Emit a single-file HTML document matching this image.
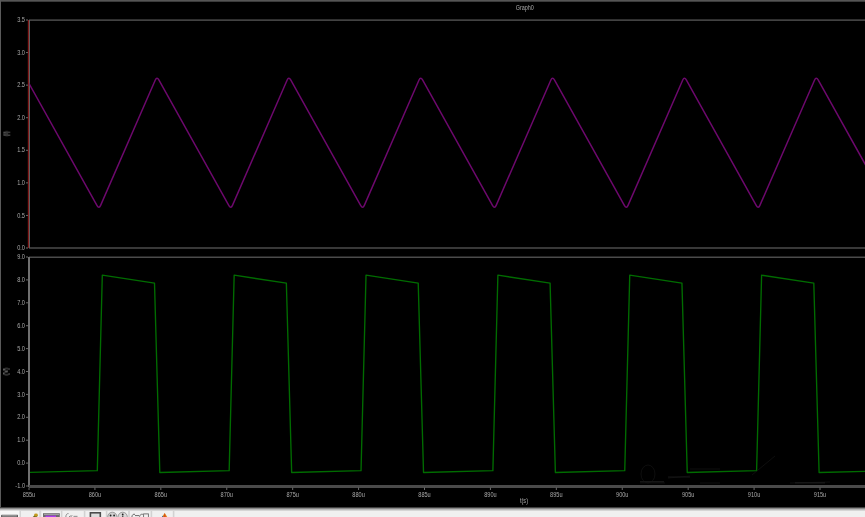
<!DOCTYPE html>
<html><head><meta charset="utf-8"><style>
html,body{margin:0;padding:0;background:#000;width:865px;height:517px;overflow:hidden}
svg{display:block;font-family:"Liberation Sans", sans-serif;}
#w{}
</style></head><body>
<div id="w"><svg width="865" height="517" viewBox="0 0 865 517">
<rect x="0" y="0" width="865" height="517" fill="#000"/>
<rect x="0" y="0" width="865" height="1.7" fill="#555"/>
<rect x="0" y="0" width="1" height="508" fill="#5a5a5a"/>
<text filter="url(#tb)" x="524.8" y="10" font-size="7" fill="#a8a8a8" text-anchor="middle" transform="translate(524.8 0) scale(0.78 1) translate(-524.8 0)">Graph0</text>
<rect x="29" y="19.5" width="836" height="1.2" fill="#5e5e5e"/>
<rect x="29" y="247.4" width="836" height="1.2" fill="#5e5e5e"/>
<rect x="29" y="20" width="1" height="228" fill="#5e5e5e"/>
<rect x="27.8" y="20" width="1.2" height="228" fill="#801a1a"/>
<rect x="29" y="256.6" width="836" height="1.2" fill="#5e5e5e"/>
<rect x="28" y="257" width="2" height="230" fill="#707070"/>
<rect x="29" y="485" width="836" height="3" fill="#4a4a4a"/>
<rect x="26" y="19.5" width="2" height="1" fill="#6a6a6a"/>
<text filter="url(#tb)" x="25" y="22.2" font-size="7" fill="#a8a8a8" text-anchor="end" transform="translate(25 0) scale(0.8 1) translate(-25 0)">3.5</text>
<rect x="26" y="52.07" width="2" height="1" fill="#6a6a6a"/>
<text filter="url(#tb)" x="25" y="54.77" font-size="7" fill="#a8a8a8" text-anchor="end" transform="translate(25 0) scale(0.8 1) translate(-25 0)">3.0</text>
<rect x="26" y="84.64" width="2" height="1" fill="#6a6a6a"/>
<text filter="url(#tb)" x="25" y="87.34" font-size="7" fill="#a8a8a8" text-anchor="end" transform="translate(25 0) scale(0.8 1) translate(-25 0)">2.5</text>
<rect x="26" y="117.21" width="2" height="1" fill="#6a6a6a"/>
<text filter="url(#tb)" x="25" y="119.91" font-size="7" fill="#a8a8a8" text-anchor="end" transform="translate(25 0) scale(0.8 1) translate(-25 0)">2.0</text>
<rect x="26" y="149.79" width="2" height="1" fill="#6a6a6a"/>
<text filter="url(#tb)" x="25" y="152.49" font-size="7" fill="#a8a8a8" text-anchor="end" transform="translate(25 0) scale(0.8 1) translate(-25 0)">1.5</text>
<rect x="26" y="182.36" width="2" height="1" fill="#6a6a6a"/>
<text filter="url(#tb)" x="25" y="185.06" font-size="7" fill="#a8a8a8" text-anchor="end" transform="translate(25 0) scale(0.8 1) translate(-25 0)">1.0</text>
<rect x="26" y="214.93" width="2" height="1" fill="#6a6a6a"/>
<text filter="url(#tb)" x="25" y="217.63" font-size="7" fill="#a8a8a8" text-anchor="end" transform="translate(25 0) scale(0.8 1) translate(-25 0)">0.5</text>
<rect x="26" y="247.5" width="2" height="1" fill="#6a6a6a"/>
<text filter="url(#tb)" x="25" y="250.2" font-size="7" fill="#a8a8a8" text-anchor="end" transform="translate(25 0) scale(0.8 1) translate(-25 0)">0.0</text>
<rect x="26" y="256.5" width="2" height="1" fill="#6a6a6a"/>
<text filter="url(#tb)" x="25" y="259.2" font-size="7" fill="#a8a8a8" text-anchor="end" transform="translate(25 0) scale(0.8 1) translate(-25 0)">9.0</text>
<rect x="26" y="279.4" width="2" height="1" fill="#6a6a6a"/>
<text filter="url(#tb)" x="25" y="282.1" font-size="7" fill="#a8a8a8" text-anchor="end" transform="translate(25 0) scale(0.8 1) translate(-25 0)">8.0</text>
<rect x="26" y="302.3" width="2" height="1" fill="#6a6a6a"/>
<text filter="url(#tb)" x="25" y="305" font-size="7" fill="#a8a8a8" text-anchor="end" transform="translate(25 0) scale(0.8 1) translate(-25 0)">7.0</text>
<rect x="26" y="325.2" width="2" height="1" fill="#6a6a6a"/>
<text filter="url(#tb)" x="25" y="327.9" font-size="7" fill="#a8a8a8" text-anchor="end" transform="translate(25 0) scale(0.8 1) translate(-25 0)">6.0</text>
<rect x="26" y="348.1" width="2" height="1" fill="#6a6a6a"/>
<text filter="url(#tb)" x="25" y="350.8" font-size="7" fill="#a8a8a8" text-anchor="end" transform="translate(25 0) scale(0.8 1) translate(-25 0)">5.0</text>
<rect x="26" y="371" width="2" height="1" fill="#6a6a6a"/>
<text filter="url(#tb)" x="25" y="373.7" font-size="7" fill="#a8a8a8" text-anchor="end" transform="translate(25 0) scale(0.8 1) translate(-25 0)">4.0</text>
<rect x="26" y="393.9" width="2" height="1" fill="#6a6a6a"/>
<text filter="url(#tb)" x="25" y="396.6" font-size="7" fill="#a8a8a8" text-anchor="end" transform="translate(25 0) scale(0.8 1) translate(-25 0)">3.0</text>
<rect x="26" y="416.8" width="2" height="1" fill="#6a6a6a"/>
<text filter="url(#tb)" x="25" y="419.5" font-size="7" fill="#a8a8a8" text-anchor="end" transform="translate(25 0) scale(0.8 1) translate(-25 0)">2.0</text>
<rect x="26" y="439.7" width="2" height="1" fill="#6a6a6a"/>
<text filter="url(#tb)" x="25" y="442.4" font-size="7" fill="#a8a8a8" text-anchor="end" transform="translate(25 0) scale(0.8 1) translate(-25 0)">1.0</text>
<rect x="26" y="462.6" width="2" height="1" fill="#6a6a6a"/>
<text filter="url(#tb)" x="25" y="465.3" font-size="7" fill="#a8a8a8" text-anchor="end" transform="translate(25 0) scale(0.8 1) translate(-25 0)">0.0</text>
<rect x="26" y="485.5" width="2" height="1" fill="#6a6a6a"/>
<text filter="url(#tb)" x="25" y="488.2" font-size="7" fill="#a8a8a8" text-anchor="end" transform="translate(25 0) scale(0.8 1) translate(-25 0)">-1.0</text>
<rect x="28.5" y="487.5" width="1" height="2.5" fill="#6a6a6a"/>
<text filter="url(#tb)" x="29" y="497.3" font-size="7" fill="#a8a8a8" text-anchor="middle" transform="translate(29 0) scale(0.8 1) translate(-29 0)">855u</text>
<rect x="94.42" y="487.5" width="1" height="2.5" fill="#6a6a6a"/>
<text filter="url(#tb)" x="94.92" y="497.3" font-size="7" fill="#a8a8a8" text-anchor="middle" transform="translate(94.92 0) scale(0.8 1) translate(-94.92 0)">860u</text>
<rect x="160.33" y="487.5" width="1" height="2.5" fill="#6a6a6a"/>
<text filter="url(#tb)" x="160.83" y="497.3" font-size="7" fill="#a8a8a8" text-anchor="middle" transform="translate(160.83 0) scale(0.8 1) translate(-160.83 0)">865u</text>
<rect x="226.25" y="487.5" width="1" height="2.5" fill="#6a6a6a"/>
<text filter="url(#tb)" x="226.75" y="497.3" font-size="7" fill="#a8a8a8" text-anchor="middle" transform="translate(226.75 0) scale(0.8 1) translate(-226.75 0)">870u</text>
<rect x="292.17" y="487.5" width="1" height="2.5" fill="#6a6a6a"/>
<text filter="url(#tb)" x="292.67" y="497.3" font-size="7" fill="#a8a8a8" text-anchor="middle" transform="translate(292.67 0) scale(0.8 1) translate(-292.67 0)">875u</text>
<rect x="358.08" y="487.5" width="1" height="2.5" fill="#6a6a6a"/>
<text filter="url(#tb)" x="358.58" y="497.3" font-size="7" fill="#a8a8a8" text-anchor="middle" transform="translate(358.58 0) scale(0.8 1) translate(-358.58 0)">880u</text>
<rect x="424" y="487.5" width="1" height="2.5" fill="#6a6a6a"/>
<text filter="url(#tb)" x="424.5" y="497.3" font-size="7" fill="#a8a8a8" text-anchor="middle" transform="translate(424.5 0) scale(0.8 1) translate(-424.5 0)">885u</text>
<rect x="489.92" y="487.5" width="1" height="2.5" fill="#6a6a6a"/>
<text filter="url(#tb)" x="490.42" y="497.3" font-size="7" fill="#a8a8a8" text-anchor="middle" transform="translate(490.42 0) scale(0.8 1) translate(-490.42 0)">890u</text>
<rect x="555.83" y="487.5" width="1" height="2.5" fill="#6a6a6a"/>
<text filter="url(#tb)" x="556.33" y="497.3" font-size="7" fill="#a8a8a8" text-anchor="middle" transform="translate(556.33 0) scale(0.8 1) translate(-556.33 0)">895u</text>
<rect x="621.75" y="487.5" width="1" height="2.5" fill="#6a6a6a"/>
<text filter="url(#tb)" x="622.25" y="497.3" font-size="7" fill="#a8a8a8" text-anchor="middle" transform="translate(622.25 0) scale(0.8 1) translate(-622.25 0)">900u</text>
<rect x="687.67" y="487.5" width="1" height="2.5" fill="#6a6a6a"/>
<text filter="url(#tb)" x="688.17" y="497.3" font-size="7" fill="#a8a8a8" text-anchor="middle" transform="translate(688.17 0) scale(0.8 1) translate(-688.17 0)">905u</text>
<rect x="753.58" y="487.5" width="1" height="2.5" fill="#6a6a6a"/>
<text filter="url(#tb)" x="754.08" y="497.3" font-size="7" fill="#a8a8a8" text-anchor="middle" transform="translate(754.08 0) scale(0.8 1) translate(-754.08 0)">910u</text>
<rect x="819.5" y="487.5" width="1" height="2.5" fill="#6a6a6a"/>
<text filter="url(#tb)" x="820" y="497.3" font-size="7" fill="#a8a8a8" text-anchor="middle" transform="translate(820 0) scale(0.8 1) translate(-820 0)">915u</text>
<text filter="url(#tb)" x="524" y="503.5" font-size="7" fill="#a8a8a8" text-anchor="middle" transform="translate(524 0) scale(0.8 1) translate(-524 0)">t(s)</text>
<text filter="url(#tb)" x="0" y="0" font-size="7" fill="#a8a8a8" text-anchor="middle" transform="translate(8.3 133.7) rotate(-90) scale(0.78 1)">(I)</text>
<text filter="url(#tb)" x="0" y="0" font-size="7" fill="#a8a8a8" text-anchor="middle" transform="translate(8.0 371.5) rotate(-90) scale(0.8 1)">(V)</text>
<defs><filter id="tb" x="-20%" y="-50%" width="140%" height="200%"><feGaussianBlur stdDeviation="0.3"/></filter><clipPath id="c1"><rect x="29.5" y="20" width="836" height="228"/></clipPath><clipPath id="c2"><rect x="30" y="257" width="836" height="228"/></clipPath></defs>
<path clip-path="url(#c1)" d="M-32.86,209 L23.44,80.07 Q25.04,76.4 26.99,79.89 L97.05,205.51 Q99,209 100.6,205.33 L155.3,80.07 Q156.9,76.4 158.85,79.89 L228.91,205.51 Q230.86,209 232.46,205.33 L287.16,80.07 Q288.76,76.4 290.71,79.89 L360.77,205.51 Q362.72,209 364.32,205.33 L419.02,80.07 Q420.62,76.4 422.57,79.89 L492.63,205.51 Q494.58,209 496.18,205.33 L550.88,80.07 Q552.48,76.4 554.43,79.89 L624.49,205.51 Q626.44,209 628.04,205.33 L682.74,80.07 Q684.34,76.4 686.29,79.89 L756.35,205.51 Q758.3,209 759.9,205.33 L814.6,80.07 Q816.2,76.4 818.15,79.89 L888.21,205.51 Q890.16,209 891.76,205.33 L948.06,76.4" fill="none" stroke="#6c086c" stroke-width="1.5" stroke-linejoin="round"/>
<polyline clip-path="url(#c2)" points="-34.56,470.7 -29.56,275.2 22.64,283.1 27.94,472.5 97.3,470.7 102.3,275.2 154.5,283.1 159.8,472.5 229.16,470.7 234.16,275.2 286.36,283.1 291.66,472.5 361.02,470.7 366.02,275.2 418.22,283.1 423.52,472.5 492.88,470.7 497.88,275.2 550.08,283.1 555.38,472.5 624.74,470.7 629.74,275.2 681.94,283.1 687.24,472.5 756.6,470.7 761.6,275.2 813.8,283.1 819.1,472.5 888.46,470.7 893.46,275.2 945.66,283.1 950.96,472.5" fill="none" stroke="#006c00" stroke-width="1.35" stroke-linejoin="round"/>
<g fill="none" stroke="#141414" stroke-width="0.7"><ellipse cx="648" cy="474" rx="7" ry="9"/><path d="M640,483 L665,483 M668,478 L690,476 M700,483 L720,483 M752,475 L775,456 M790,483 L830,482 M690,469 L720,469"/></g>
<g fill="#161616"><rect x="640" y="481" width="24" height="1.5"/><rect x="668" y="476.5" width="22" height="1"/><rect x="795" y="482" width="30" height="1.5"/></g>
<rect x="0" y="507.1" width="865" height="10.5" fill="#f0f0f0"/>
<rect x="0" y="507.1" width="865" height="1" fill="#2e2e2e"/>
<rect x="0" y="507.95" width="865" height="1" fill="#808080"/>
<rect x="0" y="508.9" width="865" height="1.6" fill="#bababa"/>
<rect x="19.3" y="510.8" width="1.6" height="7" fill="#d2d2d2"/>
<rect x="39.3" y="510.8" width="1.6" height="7" fill="#d2d2d2"/>
<rect x="60.8" y="510.8" width="1.6" height="7" fill="#d2d2d2"/>
<rect x="83.8" y="510.8" width="1.6" height="7" fill="#d2d2d2"/>
<rect x="105.8" y="510.8" width="1.6" height="7" fill="#d2d2d2"/>
<rect x="128.2" y="510.8" width="1.6" height="7" fill="#d2d2d2"/>
<rect x="150.6" y="510.8" width="1.6" height="7" fill="#d2d2d2"/>
<rect x="172.8" y="510.8" width="1.6" height="7" fill="#d2d2d2"/>
<rect x="0.5" y="510.8" width="18.8" height="7" fill="#f7f7f7"/>
<defs><linearGradient id="g0" x1="0" y1="0" x2="0" y2="1"><stop offset="0" stop-color="#d4d4d4"/><stop offset="0.35" stop-color="#8e8e8e"/><stop offset="1" stop-color="#5e5e5e"/></linearGradient></defs>
<rect x="1.2" y="514.2" width="16.8" height="4" rx="1" fill="url(#g0)"/>
<rect x="1.2" y="515.2" width="1" height="3" fill="#555"/>
<rect x="16.9" y="515.2" width="1" height="3" fill="#555"/>
<path d="M32.3,517.5 L35.5,514.2 L38,515.8 L36,517.5 Z" fill="#6f6a25"/>
<ellipse cx="36" cy="515" rx="1.9" ry="1.4" fill="#c49a1c"/>
<rect x="40.9" y="510.6" width="19.9" height="7" fill="#e4e4e4"/>
<rect x="41.6" y="511.3" width="19" height="6.5" fill="#f4f4f4"/>
<rect x="43" y="513.2" width="16.8" height="4.5" fill="#6c6c6c"/>
<rect x="44" y="513.9" width="15" height="1" fill="#a8a8a8"/>
<rect x="45.5" y="515.6" width="10.5" height="2" fill="#b03cf0"/>
<path d="M65.8,517.5 C65.8,514.5 67,513.4 68.5,513.6" fill="none" stroke="#8a8a8a" stroke-width="1"/>
<path d="M68.5,517.5 L70.5,515.6 M70.2,517.5 L72.2,515.2" fill="none" stroke="#7a7a7a" stroke-width="0.9"/>
<rect x="73.5" y="515.8" width="4" height="1.8" fill="#9a9a9a"/>
<rect x="89.6" y="512" width="11.5" height="6" fill="#4c4c4c"/>
<rect x="91.2" y="513.6" width="8.3" height="4" fill="#dcdcdc"/>
<circle cx="112.3" cy="516.8" r="4.6" fill="#cfcfcf" stroke="#8c8c8c" stroke-width="0.8"/>
<circle cx="110.6" cy="515.5" r="0.9" fill="#222"/>
<circle cx="114.1" cy="515.5" r="0.9" fill="#222"/>
<circle cx="122.7" cy="516.8" r="4.6" fill="#d8d8d8" stroke="#8c8c8c" stroke-width="0.8"/>
<circle cx="122.7" cy="514.4" r="0.9" fill="#222"/>
<rect x="122" y="515.6" width="1.4" height="2" fill="#555"/>
<path d="M131.8,517.5 C132,514.5 133.5,513.8 135,514.4 M135,515.6 L139,515.6 M139.5,517.5 C139.5,514.5 141.5,513.8 143,514.5" fill="none" stroke="#6a6a6a" stroke-width="1"/>
<rect x="143.6" y="513.9" width="4.8" height="4" fill="none" stroke="#6a6a6a" stroke-width="0.9"/>
<path d="M164.7,512.9 L167.6,517.5 L161.8,517.5 Z" fill="#e08a18"/>
<path d="M164.7,512.9 L166,517.5 L163.3,517.5 Z" fill="#d8501a"/>
<path d="M162.6,515.6 L163.6,517.5 L161.6,517.5 Z" fill="#2a6a9a"/>
</svg></div>
</body></html>
